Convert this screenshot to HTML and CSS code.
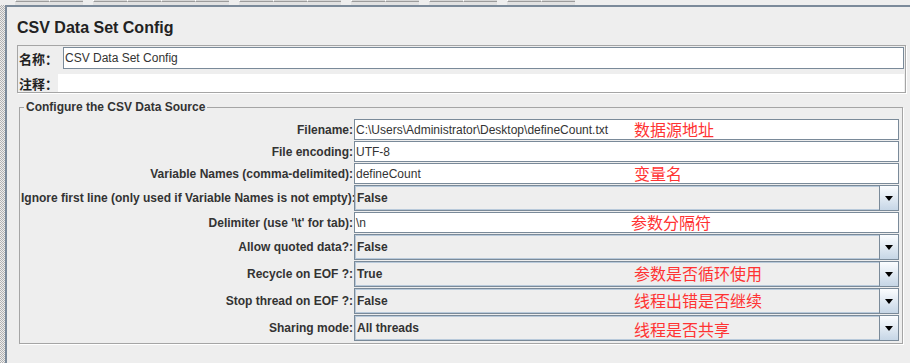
FILE: index.html
```html
<html>
    <head>
        <link rel="stylesheet" href="styles.css">
    </head>
    <body>
        <div class="toolbar">
            <div class="group"><span class="tool"></span><span class="tool"></span></div>
            <div class="group"><span class="tool"></span><span class="tool"></span><span class="tool"></span><span class="tool"></span></div>
            <div class="group"><span class="tool"></span><span class="tool"></span><span class="tool"></span></div>
            <div class="group"><span class="tool"></span><span class="tool"></span></div>
            <div class="group"><span class="tool"></span><span class="tool"></span></div>
            <div class="group"><span class="tool"></span><span class="tool"></span></div>
        </div>
        <div class="workspace">
            <div class="splitter"></div>
            <div class="panel">
                <div class="title">CSV Data Set Config</div>

                <div class="namebox">
                    <div class="namerow">
                        <span class="cnlabel">名称：</span>
                        <input type="text" class="namefield" value="CSV Data Set Config" readonly>
                    </div>
                    <div class="commentrow">
                        <span class="cnlabel short">注释：</span>
                        <div class="comment"></div>
                    </div>
                </div>

                <fieldset class="source">
                    <legend>Configure the CSV Data Source</legend>
                    <div class="form">
                        <label>Filename:</label>
                        <div class="text">C:\Users\Administrator\Desktop\defineCount.txt<span class="note">数据源地址</span></div>

                        <label>File encoding:</label>
                        <div class="text">UTF-8</div>

                        <label>Variable Names (comma-delimited):</label>
                        <div class="text">defineCount<span class="note">变量名</span></div>

                        <label>Ignore first line (only used if Variable Names is not empty):</label>
                        <div class="combo"><span class="value">False</span><span class="arrow"></span></div>

                        <label>Delimiter (use '\t' for tab):</label>
                        <div class="text">\n<span class="note up">参数分隔符</span></div>

                        <label>Allow quoted data?:</label>
                        <div class="combo"><span class="value">False</span><span class="arrow"></span></div>

                        <label>Recycle on EOF ?:</label>
                        <div class="combo"><span class="value">True</span><span class="arrow"></span><span class="note">参数是否循环使用</span></div>

                        <label>Stop thread on EOF ?:</label>
                        <div class="combo"><span class="value">False</span><span class="arrow"></span><span class="note">线程出错是否继续</span></div>

                        <label>Sharing mode:</label>
                        <div class="combo"><span class="value">All threads</span><span class="arrow"></span><span class="note down">线程是否共享</span></div>
                    </div>
                </fieldset>
            </div>
        </div>
    </body>
</html>
```

FILE: styles.css
```css
body
{
    margin: 0;
    height: 363px;
    overflow: hidden;
    background-color: #eeeeee;
    font-family: "Liberation Sans", Arial, sans-serif;
    font-size: 12px;
    color: #333333;
}

/* strip of the toolbar above the panel */
.toolbar
{
    display: flex;
    gap: 10px;
    height: 5px;
    padding-left: 15px;
}
.toolbar .group
{
    display: flex;
    background-color: #e2e2e2;
}
.tool
{
    width: 33px;
    height: 1px;
    background-color: #d6d6d6;
    border-left: 1px solid #ffffff;
    border-bottom: 1px solid #9c9c9c;
}

.workspace
{
    display: flex;
    height: 358px;
}
.splitter
{
    width: 5px;
    background: conic-gradient(#b2b2b2 25%, #eeeeee 0 50%, #b2b2b2 0 75%, #eeeeee 0) 0 0 / 2px 2px;
}
.panel
{
    flex: 1;
    border-top: 2px solid #7b8a9a;
    border-left: 2px solid #7b8a9a;
    padding: 12px 4px 0 10px;
}
.title
{
    font-size: 16px;
    line-height: 18px;
    font-weight: bold;
    color: #222222;
}

/* name + comment */
.namebox
{
    margin-top: 8px;
    border: 1px solid #a5a5a5;
    box-shadow: 1px 1px 0 #ffffff;
    padding: 1px 1px 0 1px;
}
.namerow
{
    display: flex;
    align-items: center;
    height: 22px;
}
.cnlabel
{
    width: 44px;
    font-family: "Noto Sans CJK SC", sans-serif;
    font-size: 13px;
    font-weight: bold;
    color: #222222;
    white-space: nowrap;
}
.cnlabel.short
{
    width: 39px;
}
.namefield
{
    flex: 1;
    height: 22px;
    box-sizing: border-box;
    margin: 0;
    padding: 0 1px;
    border: 1px solid #7a8a99;
    outline: none;
    background-color: #ffffff;
    font-family: "Liberation Sans", Arial, sans-serif;
    font-size: 12px;
    color: #333333;
}
.commentrow
{
    display: flex;
    align-items: center;
    height: 18px;
    margin-top: 5px;
}
.comment
{
    flex: 1;
    align-self: stretch;
    background-color: #ffffff;
}

/* csv data source group */
.source
{
    margin: 7px 3px 0 2px;
    padding: 5px 3px 2px 1px;
    min-width: 0;
    border: 1px solid #a5a5a5;
    box-shadow: 1px 1px 0 #ffffff;
}
.source legend
{
    margin-left: 3px;
    padding: 0 2px;
    font-size: 12px;
    line-height: 14px;
    font-weight: bold;
    color: #333333;
}
.form
{
    display: grid;
    grid-template-columns: 332px 1fr;
    column-gap: 1px;
    row-gap: 1px;
    align-items: center;
}
.form label
{
    text-align: right;
    font-weight: bold;
    white-space: nowrap;
}
.text
{
    position: relative;
    display: flex;
    align-items: center;
    height: 21px;
    box-sizing: border-box;
    padding-left: 1px;
    border: 1px solid #7a8a99;
    background-color: #ffffff;
    white-space: nowrap;
}
.combo
{
    position: relative;
    display: flex;
    align-items: center;
    height: 26px;
    box-sizing: border-box;
    border: 1px solid #7a8a99;
    box-shadow: inset 0 0 0 1px #b8c9da;
    background-color: #eeeeee;
    font-weight: bold;
}
.combo .value
{
    flex: 1;
    padding-left: 2px;
}
.arrow
{
    display: flex;
    align-items: center;
    justify-content: center;
    align-self: stretch;
    width: 19px;
    box-sizing: border-box;
    border-left: 1px solid #7a8a99;
    background: linear-gradient(#fbfdff, #c6d6e6);
}
.arrow::after
{
    content: "";
    border-left: 4px solid transparent;
    border-right: 4px solid transparent;
    border-top: 5px solid #000000;
}

/* red hand-written remarks over the fields */
.note
{
    position: absolute;
    left: 279px;
    top: 50%;
    margin-top: -10px;
    line-height: 18px;
    font-family: "Noto Sans CJK SC", sans-serif;
    font-size: 16px;
    font-weight: normal;
    color: #ff3333;
    white-space: nowrap;
}
.note.up
{
    left: 276px;
    margin-top: -10px;
}
.note.down
{
    margin-top: -8px;
}
```
